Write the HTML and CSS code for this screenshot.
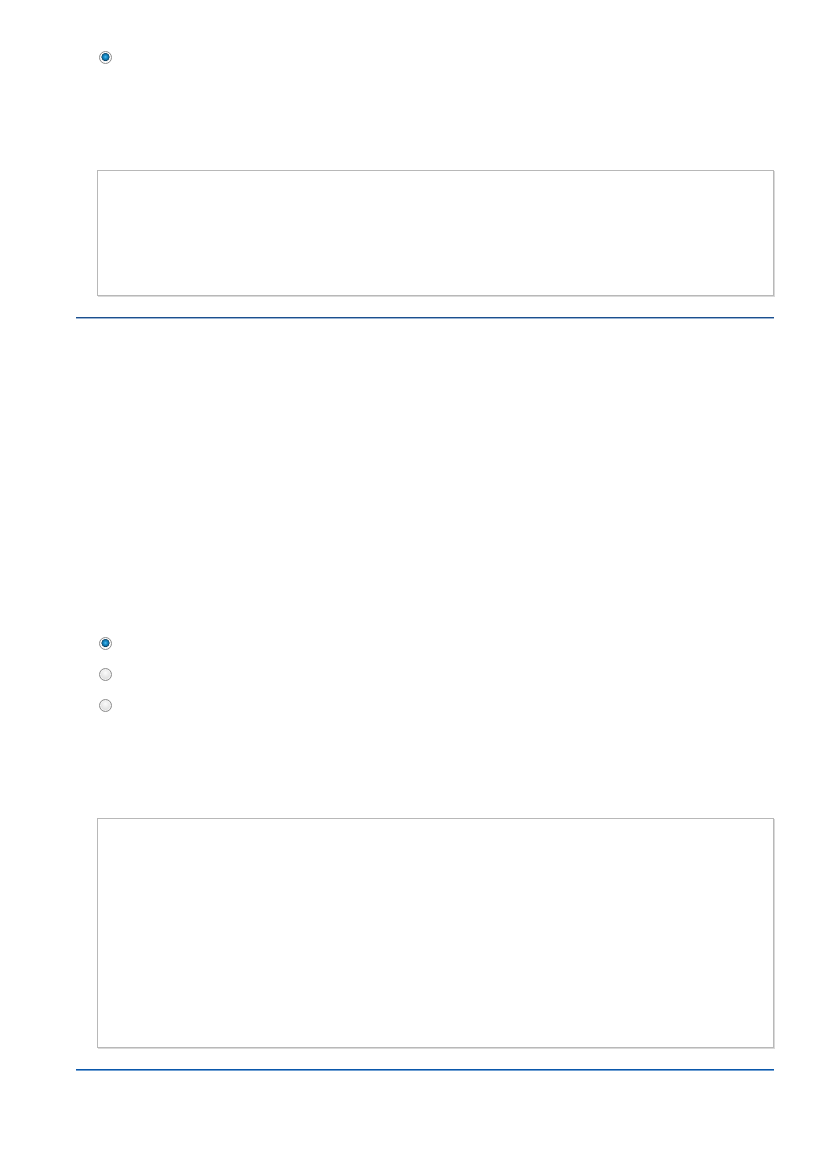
FILE: index.html
```html
<!DOCTYPE html>
<html lang="en">
<head>
    <meta charset="UTF-8">
    <meta name="viewport" content="width=device-width, initial-scale=1.0">
    <title>Form</title>
    <link rel="stylesheet" href="styles.css">
</head>
<body>
    <div class="page">
        <div class="group first">
            <ul class="choices">
                <li><input type="radio" name="q1" checked/></li>
            </ul>
            <div class="answer short"></div>
            <div class="rule dark"></div>
        </div>

        <div class="group second">
            <ul class="choices">
                <li><input type="radio" name="q2" checked/></li>
                <li><input type="radio" name="q2"/></li>
                <li><input type="radio" name="q2"/></li>
            </ul>
            <div class="answer tall"></div>
            <div class="rule"></div>
        </div>
    </div>
</body>
</html>
```

FILE: styles.css
```css
*{
    margin: 0;
    padding: 0;
    box-sizing: border-box;
}
body{
    background: #fff;
    font-family: "Liberation Sans", Arial, sans-serif;
}
li{
    list-style: none;
}
.page{
    padding: 51px 53px 0 76px;
}
.choices{
    display: flex;
    flex-direction: column;
    gap: 18px;
    padding-left: 23px;
}
.choices li{
    height: 13px;
}
.choices input{
    appearance: none;
    -webkit-appearance: none;
    display: block;
    width: 13px;
    height: 13px;
    border-radius: 50%;
    border: 1px solid #8c8c8c;
    background: radial-gradient(circle at 50% 35%, #fbfbfb 0, #e2e2e2 60%, #c9c9c9 100%);
    box-shadow: inset 0 0 0 1px #f4f4f4;
}
.choices input:checked{
    background:
        radial-gradient(circle at 50% 45%, #52c0ee 0, #1b90cf 1.5px, #0f6e9f 3px, #083a5c 3.8px, transparent 4.3px),
        radial-gradient(circle, #ffffff 0, #e8e8e8 100%);
    box-shadow: inset 0 0 0 1px #ffffff;
}
.answer{
    margin: 106px 0 0 21px;
    border: 1px solid #b8b8b8;
    box-shadow: 1px 1px 0 #d9d9d9;
}
.short{
    height: 126px;
}
.tall{
    height: 230px;
}
.rule{
    margin-top: 21px;
    height: 2px;
    border-top: 1px solid #0a57ab;
    border-bottom: 1px solid #6f9fd2;
}
.rule.dark{
    border-top-color: #1b4f8e;
    border-bottom-color: #9ab4d4;
}
.second{
    margin-top: 318px;
}
```
